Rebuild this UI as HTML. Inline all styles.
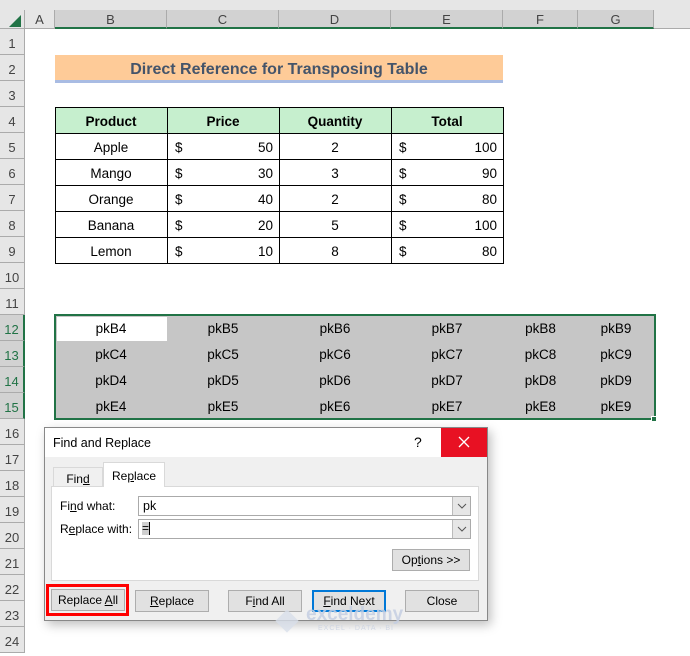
<!DOCTYPE html>
<html><head><style>
body{margin:0;width:690px;height:654px;overflow:hidden;background:#fff;font-family:"Liberation Sans",sans-serif;position:relative}
div{position:absolute;box-sizing:border-box}
.ch{top:10px;height:19px;background:#d2d2d2;border-right:1px solid #ababab;font-size:13px;color:#444;text-align:center;line-height:19px;border-bottom:2px solid #217346}
.rh{left:0;width:25px;height:26px;background:#e6e6e6;border-bottom:1px solid #ababab;border-right:1px solid #ababab;font-size:13px;color:#444;text-align:center;line-height:29px}
.rs{background:#d2d2d2;color:#217346;border-right:2px solid #217346}
.c{height:26px;font-size:13.5px;line-height:27px;color:#000;text-align:center}
.s{color:#000;font-size:13.5px;line-height:27px;text-align:center;height:26px}
.btn{height:22px;background:#e1e1e1;border:1px solid #adadad;font-size:12px;text-align:center;line-height:20px;color:#000}
u{text-decoration:underline}
</style></head><body>
<div style="left:0;top:0;width:690px;height:10px;background:#e6e6e6"></div>
<div style="left:0;top:10px;width:25px;height:19px;background:#e6e6e6;border-right:1px solid #ababab;border-bottom:1px solid #ababab"></div>
<div style="left:9px;top:15px;width:0;height:0;border-left:12px solid transparent;border-bottom:12px solid #217346"></div>
<div class="ch" style="left:25px;width:30px;background:#e6e6e6;border-bottom:1px solid #ababab">A</div>
<div class="ch" style="left:55px;width:112px">B</div>
<div class="ch" style="left:167px;width:112px">C</div>
<div class="ch" style="left:279px;width:112px">D</div>
<div class="ch" style="left:391px;width:112px">E</div>
<div class="ch" style="left:503px;width:75px">F</div>
<div class="ch" style="left:578px;width:76px">G</div>
<div style="left:654px;top:10px;width:36px;height:19px;background:#e6e6e6;border-bottom:1px solid #ababab"></div>

<div class="rh" style="top:29px">1</div>
<div class="rh" style="top:55px">2</div>
<div class="rh" style="top:81px">3</div>
<div class="rh" style="top:107px">4</div>
<div class="rh" style="top:133px">5</div>
<div class="rh" style="top:159px">6</div>
<div class="rh" style="top:185px">7</div>
<div class="rh" style="top:211px">8</div>
<div class="rh" style="top:237px">9</div>
<div class="rh" style="top:263px">10</div>
<div class="rh" style="top:289px">11</div>
<div class="rh rs" style="top:315px">12</div>
<div class="rh rs" style="top:341px">13</div>
<div class="rh rs" style="top:367px">14</div>
<div class="rh rs" style="top:393px">15</div>
<div class="rh" style="top:419px">16</div>
<div class="rh" style="top:445px">17</div>
<div class="rh" style="top:471px">18</div>
<div class="rh" style="top:497px">19</div>
<div class="rh" style="top:523px">20</div>
<div class="rh" style="top:549px">21</div>
<div class="rh" style="top:575px">22</div>
<div class="rh" style="top:601px">23</div>
<div class="rh" style="top:627px">24</div>

<div style="left:55px;top:55px;width:448px;height:28px;background:#fecb98;border-bottom:3px solid #a9bce3;font-weight:bold;font-size:16px;color:#44546a;text-align:center;line-height:29px">Direct Reference for Transposing Table</div>

<div style="left:55px;top:107px;width:449px;height:157px;border:1px solid #000"></div>
<div style="left:56px;top:108px;width:447px;height:25px;background:#c6efce"></div>
<div style="left:167px;top:107px;width:1px;height:157px;background:#000"></div>
<div style="left:279px;top:107px;width:1px;height:157px;background:#000"></div>
<div style="left:391px;top:107px;width:1px;height:157px;background:#000"></div>
<div style="left:55px;top:133px;width:449px;height:1px;background:#000"></div>
<div style="left:55px;top:159px;width:449px;height:1px;background:#000"></div>
<div style="left:55px;top:185px;width:449px;height:1px;background:#000"></div>
<div style="left:55px;top:211px;width:449px;height:1px;background:#000"></div>
<div style="left:55px;top:237px;width:449px;height:1px;background:#000"></div>

<div class="c" style="left:55px;top:108px;width:112px;font-weight:bold">Product</div>
<div class="c" style="left:167px;top:108px;width:112px;font-weight:bold">Price</div>
<div class="c" style="left:279px;top:108px;width:112px;font-weight:bold">Quantity</div>
<div class="c" style="left:391px;top:108px;width:112px;font-weight:bold">Total</div>

<div class="c" style="left:55px;top:134px;width:112px">Apple</div>
<div class="c" style="left:55px;top:160px;width:112px">Mango</div>
<div class="c" style="left:55px;top:186px;width:112px">Orange</div>
<div class="c" style="left:55px;top:212px;width:112px">Banana</div>
<div class="c" style="left:55px;top:238px;width:112px">Lemon</div>

<div class="c" style="left:175px;top:134px">$</div><div class="c" style="left:175px;top:160px">$</div><div class="c" style="left:175px;top:186px">$</div><div class="c" style="left:175px;top:212px">$</div><div class="c" style="left:175px;top:238px">$</div>
<div class="c" style="left:399px;top:134px">$</div><div class="c" style="left:399px;top:160px">$</div><div class="c" style="left:399px;top:186px">$</div><div class="c" style="left:399px;top:212px">$</div><div class="c" style="left:399px;top:238px">$</div>
<div class="c" style="left:200px;top:134px;width:73px;text-align:right">50</div>
<div class="c" style="left:200px;top:160px;width:73px;text-align:right">30</div>
<div class="c" style="left:200px;top:186px;width:73px;text-align:right">40</div>
<div class="c" style="left:200px;top:212px;width:73px;text-align:right">20</div>
<div class="c" style="left:200px;top:238px;width:73px;text-align:right">10</div>
<div class="c" style="left:279px;top:134px;width:112px">2</div>
<div class="c" style="left:279px;top:160px;width:112px">3</div>
<div class="c" style="left:279px;top:186px;width:112px">2</div>
<div class="c" style="left:279px;top:212px;width:112px">5</div>
<div class="c" style="left:279px;top:238px;width:112px">8</div>
<div class="c" style="left:420px;top:134px;width:77px;text-align:right">100</div>
<div class="c" style="left:420px;top:160px;width:77px;text-align:right">90</div>
<div class="c" style="left:420px;top:186px;width:77px;text-align:right">80</div>
<div class="c" style="left:420px;top:212px;width:77px;text-align:right">100</div>
<div class="c" style="left:420px;top:238px;width:77px;text-align:right">80</div>

<div style="left:54px;top:314px;width:602px;height:106px;border:2px solid #217346;background:#c6c6c6"></div>
<div style="left:57px;top:317px;width:110px;height:24px;background:#fff"></div>
<div style="left:651px;top:416px;width:6px;height:6px;background:#217346;border:1px solid #fff"></div>
<div class="s" style="left:55px;top:315px;width:112px">pkB4</div><div class="s" style="left:167px;top:315px;width:112px">pkB5</div><div class="s" style="left:279px;top:315px;width:112px">pkB6</div><div class="s" style="left:391px;top:315px;width:112px">pkB7</div><div class="s" style="left:503px;top:315px;width:75px">pkB8</div><div class="s" style="left:578px;top:315px;width:76px">pkB9</div>
<div class="s" style="left:55px;top:341px;width:112px">pkC4</div><div class="s" style="left:167px;top:341px;width:112px">pkC5</div><div class="s" style="left:279px;top:341px;width:112px">pkC6</div><div class="s" style="left:391px;top:341px;width:112px">pkC7</div><div class="s" style="left:503px;top:341px;width:75px">pkC8</div><div class="s" style="left:578px;top:341px;width:76px">pkC9</div>
<div class="s" style="left:55px;top:367px;width:112px">pkD4</div><div class="s" style="left:167px;top:367px;width:112px">pkD5</div><div class="s" style="left:279px;top:367px;width:112px">pkD6</div><div class="s" style="left:391px;top:367px;width:112px">pkD7</div><div class="s" style="left:503px;top:367px;width:75px">pkD8</div><div class="s" style="left:578px;top:367px;width:76px">pkD9</div>
<div class="s" style="left:55px;top:393px;width:112px">pkE4</div><div class="s" style="left:167px;top:393px;width:112px">pkE5</div><div class="s" style="left:279px;top:393px;width:112px">pkE6</div><div class="s" style="left:391px;top:393px;width:112px">pkE7</div><div class="s" style="left:503px;top:393px;width:75px">pkE8</div><div class="s" style="left:578px;top:393px;width:76px">pkE9</div>

<!-- dialog -->
<div style="left:44px;top:427px;width:444px;height:194px;background:#f0f0f0;border:1px solid #888;box-shadow:3px 4px 10px rgba(0,0,0,0.25)"></div>
<div style="left:45px;top:428px;width:442px;height:29px;background:#fff"></div>
<div style="left:53px;top:436px;font-size:12.5px;color:#000">Find and Replace</div>
<div style="left:414px;top:434px;font-size:14px;color:#000">?</div>
<div style="left:441px;top:428px;width:46px;height:29px;background:#e81123"><svg width="46" height="29" style="position:absolute;left:0;top:0"><path d="M18 9 L28 19 M28 9 L18 19" stroke="#fff" stroke-width="1.3"/></svg></div>
<div style="left:53px;top:467px;width:50px;height:20px;border:1px solid #d9d9d9;border-bottom:none;font-size:12px;text-align:center;line-height:22px">Fin<u>d</u></div>
<div style="left:103px;top:462px;width:62px;height:25px;background:#fff;border:1px solid #d9d9d9;border-bottom:none;font-size:12px;text-align:center;line-height:26px;z-index:2">Re<u>p</u>lace</div>
<div style="left:51px;top:486px;width:428px;height:95px;background:#fff;border:1px solid #d9d9d9"></div>
<div style="left:60px;top:499px;font-size:12px">Fi<u>n</u>d what:</div>
<div style="left:60px;top:522px;font-size:12px">R<u>e</u>place with:</div>
<div style="left:138px;top:496px;width:333px;height:20px;border:1px solid #aaa;background:#fff;font-size:12.5px;line-height:18px;padding-left:4px">pk</div>
<div style="left:452px;top:497px;width:18px;height:18px;background:#e6e6e6;border-left:1px solid #bbb"><svg width="18" height="18" style="position:absolute;left:0;top:0"><path d="M5 7 L9 11 L13 7" stroke="#555" fill="none"/></svg></div>
<div style="left:138px;top:519px;width:333px;height:20px;border:1px solid #aaa;background:#fff"></div>
<div style="left:142px;top:522px;width:8px;height:13px;background:#cfcfcf;border-right:1px solid #000;font-size:12px;line-height:13px">=</div>
<div style="left:452px;top:520px;width:18px;height:18px;background:#e6e6e6;border-left:1px solid #bbb"><svg width="18" height="18" style="position:absolute;left:0;top:0"><path d="M5 7 L9 11 L13 7" stroke="#555" fill="none"/></svg></div>
<div class="btn" style="left:392px;top:549px;width:78px">Op<u>t</u>ions &gt;&gt;</div>

<div style="left:46px;top:584px;width:83px;height:32px;border:3px solid #f00"></div>
<div class="btn" style="left:51px;top:589px;width:74px">Replace <u>A</u>ll</div>
<div class="btn" style="left:135px;top:590px;width:74px"><u>R</u>eplace</div>
<div class="btn" style="left:228px;top:590px;width:74px">F<u>i</u>nd All</div>
<div class="btn" style="left:312px;top:590px;width:74px;border:2px solid #0078d7;line-height:18px"><u>F</u>ind Next</div>
<div class="btn" style="left:405px;top:590px;width:74px">Close</div>
<div style="left:276px;top:610px;width:22px;height:22px;background:#d8deea;transform:rotate(45deg) scale(.75);opacity:.8"></div>
<div style="left:306px;top:604px;color:#c5cfe2;font-size:19px;font-weight:bold;opacity:.85">exceldemy</div>
<div style="left:318px;top:625px;color:#cdd4e2;font-size:7px;letter-spacing:1px;opacity:.9">EXCEL · DATA · BI</div>
</body></html>
